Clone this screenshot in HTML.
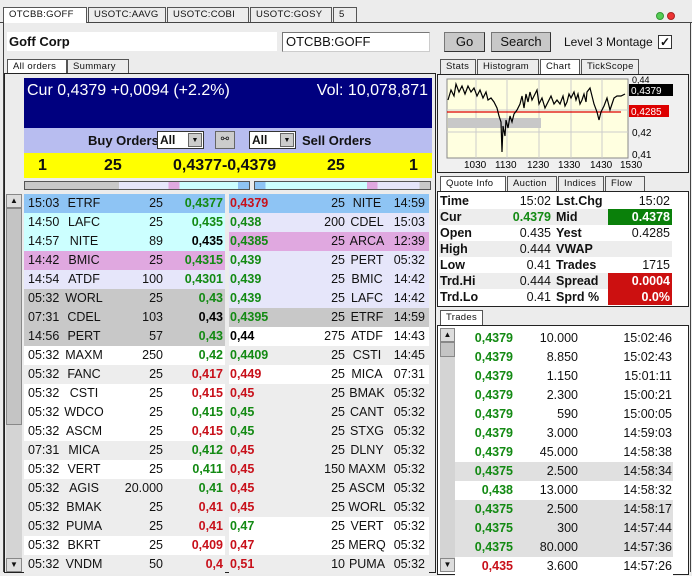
<!DOCTYPE html><html><head><meta charset="utf-8"><style>
*{margin:0;padding:0;box-sizing:border-box}
body{width:692px;height:572px;overflow:hidden;background:#ececec;font-family:"Liberation Sans",sans-serif;font-size:12px;color:#111;position:relative}
.a{position:absolute}
.tab{position:absolute;height:15px;border:1px solid #555;border-bottom:none;background:#ececec;font-size:9.5px;letter-spacing:.3px;padding:1px 0 0 5px;white-space:nowrap;overflow:hidden}
.r{position:absolute;height:19px;line-height:19px;font-size:12.5px}
.r span{position:absolute;white-space:nowrap}
.g{color:#138a13;font-weight:bold}.d{color:#c8101a;font-weight:bold}.k{color:#000;font-weight:bold}
.q{position:absolute;height:16px;line-height:16px;left:439px;width:233px;font-size:12.5px}
.q span{position:absolute;white-space:nowrap}
.btn{position:absolute;background:#c8c8c8;border:1px solid #777;border-right-color:#333;border-bottom-color:#333;text-align:center;font-size:13px;line-height:17px}
</style></head><body>
<div class="a" style="left:0;top:22px;width:692px;height:1px;background:#444"></div>
<div class="tab" style="left:3px;top:7px;width:84px;background:#fff;height:16px">OTCBB:GOFF</div>
<div class="tab" style="left:88px;top:7px;width:78px">USOTC:AAVG</div>
<div class="tab" style="left:167px;top:7px;width:82px">USOTC:COBI</div>
<div class="tab" style="left:250px;top:7px;width:82px">USOTC:GOSY</div>
<div class="tab" style="left:333px;top:7px;width:24px">5</div>
<div class="a" style="left:656px;top:12px;width:8px;height:8px;border-radius:50%;background:#5c5;border:1px solid #393"></div>
<div class="a" style="left:667px;top:12px;width:8px;height:8px;border-radius:50%;background:#e33;border:1px solid #a22"></div>
<div class="a" style="left:3px;top:22px;width:1px;height:550px;background:#444"></div>
<div class="a" style="left:690px;top:22px;width:1px;height:550px;background:#444"></div>
<div class="a" style="left:7px;top:32px;width:270px;height:19px;background:#fff;font-weight:bold;font-size:13px;line-height:19px;padding-left:2px">Goff Corp</div>
<div class="a" style="left:282px;top:32px;width:148px;height:20px;background:#fff;border:1px solid #777;border-right-color:#ccc;border-bottom-color:#ccc;font-size:13px;line-height:18px;padding-left:3px">OTCBB:GOFF</div>
<div class="btn" style="left:444px;top:32px;width:41px;height:20px">Go</div>
<div class="btn" style="left:491px;top:32px;width:60px;height:20px">Search</div>
<div class="a" style="left:564px;top:34px;font-size:12px;line-height:17px">Level 3 Montage</div>
<div class="a" style="left:658px;top:35px;width:14px;height:14px;background:#fff;border:1px solid #333;font-size:12px;line-height:12px;text-align:center;font-weight:bold">✓</div>
<div class="tab" style="left:7px;top:59px;width:60px;background:#fff">All orders</div>
<div class="tab" style="left:67px;top:59px;width:62px">Summary</div>
<div class="a" style="left:4px;top:73px;width:432px;height:500px;border:1px solid #222;background:#ececec"></div>
<div class="a" style="left:24px;top:78px;width:408px;height:50px;background:#00007f;color:#fff;font-size:16px;padding:4px 3px;line-height:18px">Cur 0,4379 +0,0094 (+2.2%)<span style="position:absolute;right:4px;top:4px">Vol: 10,078,871</span></div>
<div class="a" style="left:24px;top:128px;width:408px;height:25px;background:#b8bdf0"></div>
<div class="a" style="left:88px;top:133px;font-weight:bold;font-size:13px">Buy Orders</div>
<div class="a" style="left:157px;top:131px;width:47px;height:18px;background:#fff;border:1px solid #333;font-weight:bold;font-size:12px;padding-left:2px;line-height:16px">All<span style="position:absolute;right:1px;top:1px;width:14px;height:14px;background:#ccc;border:1px solid #666;font-size:7px;text-align:center;line-height:13px">▼</span></div>
<div class="a" style="left:215px;top:131px;width:20px;height:18px;background:#ccc;border:1px solid #666;font-size:10px;text-align:center;line-height:16px">⚯</div>
<div class="a" style="left:249px;top:131px;width:47px;height:18px;background:#fff;border:1px solid #333;font-weight:bold;font-size:12px;padding-left:2px;line-height:16px">All<span style="position:absolute;right:1px;top:1px;width:14px;height:14px;background:#ccc;border:1px solid #666;font-size:7px;text-align:center;line-height:13px">▼</span></div>
<div class="a" style="left:302px;top:133px;font-weight:bold;font-size:13px">Sell Orders</div>
<div class="a" style="left:24px;top:153px;width:408px;height:25px;background:#ffff00;font-weight:bold;font-size:16px;line-height:25px">
<span style="position:absolute;left:14px">1</span><span style="position:absolute;left:80px">25</span><span style="position:absolute;left:149px">0,4377-0,4379</span><span style="position:absolute;left:303px">25</span><span style="position:absolute;left:385px">1</span></div>
<div class="a" style="left:24px;top:181px;width:226px;height:9px;border:1px solid #555;background:linear-gradient(90deg,#c8c8c8 0 42%,#e6e6fa 42% 64%,#e0a8e0 64% 69%,#ccffff 69% 95%,#8ec4f4 95%)"></div>
<div class="a" style="left:254px;top:181px;width:177px;height:9px;border:1px solid #555;background:linear-gradient(90deg,#8ec4f4 0 6%,#ccffff 6% 64%,#e0a8e0 64% 70%,#e6e6fa 70% 94%,#c8c8c8 94%)"></div>
<div class="a" style="left:6px;top:194px;width:16px;height:378px;background:#d4d4d4"></div>
<div class="a" style="left:6px;top:194px;width:16px;height:14px;background:#ddd;border:1px solid #888;font-size:8px;text-align:center;line-height:12px">▲</div>
<div class="a" style="left:6px;top:208px;width:16px;height:217px;background:#c4c4c4;border:1px solid #888"></div>
<div class="a" style="left:6px;top:558px;width:16px;height:14px;background:#ddd;border:1px solid #888;font-size:8px;text-align:center;line-height:12px">▼</div>
<div id="L"></div>
<div class="tab" style="left:440px;top:59px;width:36px">Stats</div>
<div class="tab" style="left:477px;top:59px;width:62px">Histogram</div>
<div class="tab" style="left:540px;top:59px;width:40px;background:#fff">Chart</div>
<div class="tab" style="left:581px;top:59px;width:58px">TickScope</div>
<div class="a" style="left:437px;top:74px;width:252px;height:99px;border:1px solid #222;background:#f0f0f0"></div>
<svg class="a" style="left:437px;top:74px" width="252" height="99">
<rect x="10" y="5" width="181" height="79" fill="#ffffe0" stroke="#888"/>
<g stroke="#ccc" stroke-width="1"><line x1="39" y1="5" x2="39" y2="84"/><line x1="70" y1="5" x2="70" y2="84"/><line x1="102" y1="5" x2="102" y2="84"/><line x1="134" y1="5" x2="134" y2="84"/><line x1="165" y1="5" x2="165" y2="84"/><line x1="10" y1="36" x2="191" y2="36"/><line x1="10" y1="58" x2="191" y2="58"/></g>
<rect x="11" y="44" width="93" height="10" fill="#c8c8c8"/>
<line x1="10" y1="38" x2="184" y2="38" stroke="#d00" stroke-width="1.2"/>
<polyline fill="none" stroke="#000" stroke-width="1.2" points="11,26 14,16 17,22 19,10 22,18 25,12 28,20 31,12 34,18 37,14 40,22 43,16 46,24 49,18 51,26 54,24 57,28 60,34 62,42 64,48 65,78 66,52 68,62 69,46 71,54 73,42 75,48 77,40 80,36 83,30 85,22 87,34 89,20 91,28 93,18 95,26 98,20 100,16 102,30 105,24 108,34 111,28 114,22 117,30 120,26 123,30 126,22 128,32 130,28 132,20 134,24 137,18 139,26 141,20 143,30 145,26 147,20 149,28 150,18 153,14 155,22 157,30 160,38 162,46 164,38 167,32 170,24 173,36 175,30 177,24 180,22 184,22 188,20"/>
<text x="195" y="9" fill="#000" font-size="9" font-family="Liberation Sans">0,44</text>
<rect x="192" y="10" width="44" height="12" fill="#000"/><text x="194" y="20" fill="#fff" font-size="10" font-family="Liberation Sans">0,4379</text>
<rect x="192" y="31" width="40" height="12" fill="#d00"/><text x="194" y="41" fill="#fff" font-size="10" font-family="Liberation Sans">0,4285</text>
<text x="195" y="62" fill="#000" font-size="10" font-family="Liberation Sans">0,42</text>
<text x="195" y="84" fill="#000" font-size="10" font-family="Liberation Sans">0,41</text>
<g font-size="10" font-family="Liberation Sans" fill="#000"><text x="27" y="94">1030</text><text x="58" y="94">1130</text><text x="90" y="94">1230</text><text x="121" y="94">1330</text><text x="153" y="94">1430</text><text x="183" y="94">1530</text></g>
</svg>
<div class="tab" style="left:440px;top:176px;width:66px;background:#fff">Quote Info</div>
<div class="tab" style="left:507px;top:176px;width:50px">Auction</div>
<div class="tab" style="left:558px;top:176px;width:46px">Indices</div>
<div class="tab" style="left:605px;top:176px;width:40px">Flow</div>
<div class="a" style="left:437px;top:191px;width:252px;height:116px;border:1px solid #222;background:#fff"></div>
<div id="Q"></div>
<div class="tab" style="left:440px;top:310px;width:43px;background:#fff">Trades</div>
<div class="a" style="left:437px;top:325px;width:252px;height:250px;border:1px solid #222;background:#fff"></div>
<div class="a" style="left:440px;top:328px;width:15px;height:244px;background:#d4d4d4"></div>
<div class="a" style="left:440px;top:328px;width:15px;height:14px;background:#ddd;border:1px solid #888;font-size:8px;text-align:center;line-height:12px">▲</div>
<div class="a" style="left:440px;top:342px;width:15px;height:15px;background:#c4c4c4;border:1px solid #888"></div>
<div class="a" style="left:440px;top:558px;width:15px;height:14px;background:#ddd;border:1px solid #888;font-size:8px;text-align:center;line-height:12px">▼</div>
<div id="T"></div>
<script>
var B='#8ec4f4',C='#ccffff',P='#e0a8e0',V='#e6e6fa',G='#c8c8c8',W='#fff',E='#ededed';
var L=[[B,'15:03','ETRF','25','0,4377','g'],[C,'14:50','LAFC','25','0,435','g'],[C,'14:57','NITE','89','0,435','k'],[P,'14:42','BMIC','25','0,4315','g'],[V,'14:54','ATDF','100','0,4301','g'],[G,'05:32','WORL','25','0,43','g'],[G,'07:31','CDEL','103','0,43','k'],[G,'14:56','PERT','57','0,43','g'],[W,'05:32','MAXM','250','0,42','g'],[E,'05:32','FANC','25','0,417','d'],[W,'05:32','CSTI','25','0,415','d'],[W,'05:32','WDCO','25','0,415','g'],[W,'05:32','ASCM','25','0,415','d'],[E,'07:31','MICA','25','0,412','g'],[W,'05:32','VERT','25','0,411','g'],[E,'05:32','AGIS','20.000','0,41','g'],[E,'05:32','BMAK','25','0,41','d'],[E,'05:32','PUMA','25','0,41','d'],[W,'05:32','BKRT','25','0,409','d'],[E,'05:32','VNDM','50','0,4','d']];
var R=[[B,'0,4379','d','25','NITE','14:59'],[V,'0,438','g','200','CDEL','15:03'],[P,'0,4385','g','25','ARCA','12:39'],[V,'0,439','g','25','PERT','05:32'],[V,'0,439','g','25','BMIC','14:42'],[V,'0,439','g','25','LAFC','14:42'],[G,'0,4395','g','25','ETRF','14:59'],[W,'0,44','k','275','ATDF','14:43'],[E,'0,4409','g','25','CSTI','14:45'],[W,'0,449','d','25','MICA','07:31'],[E,'0,45','d','25','BMAK','05:32'],[E,'0,45','g','25','CANT','05:32'],[E,'0,45','g','25','STXG','05:32'],[E,'0,45','d','25','DLNY','05:32'],[E,'0,45','d','150','MAXM','05:32'],[E,'0,45','d','25','ASCM','05:32'],[E,'0,45','d','25','WORL','05:32'],[W,'0,47','g','25','VERT','05:32'],[W,'0,47','d','25','MERQ','05:32'],[E,'0,51','d','10','PUMA','05:32']];
var h='';
for(var i=0;i<20;i++){var y=194+19*i,a=L[i],b=R[i];
h+='<div class="r" style="left:24px;top:'+y+'px;width:201px;background:'+a[0]+'"><span style="left:4px">'+a[1]+'</span><span style="left:38px;width:44px;text-align:center">'+a[2]+'</span><span style="right:62px">'+a[3]+'</span><span class="'+a[5]+'" style="right:2px">'+a[4]+'</span></div>';
h+='<div class="r" style="left:229px;top:'+y+'px;width:200px;background:'+b[0]+'"><span class="'+b[2]+'" style="left:1px">'+b[1]+'</span><span style="right:84px">'+b[3]+'</span><span style="left:117px;width:42px;text-align:center">'+b[4]+'</span><span style="right:4px">'+b[5]+'</span></div>';}
document.getElementById('L').outerHTML=h;
var Q=[['Time','15:02','Lst.Chg','15:02',W],['Cur','0.4379','Mid','0.4378',E,'cur','mid'],[' Open','0.435','Yest','0.4285',W],['High','0.444','VWAP','',E],['Low','0.41','Trades','1715',W],['Trd.Hi','0.444','Spread','0.0004',E,0,'red'],['Trd.Lo','0.41','Sprd %','0.0%',W,0,'red']];
h='';for(i=0;i<7;i++){var q=Q[i],y=193+16*i;
var bx='';
if(q[6]=='mid')bx='<span style="left:169px;width:64px;height:16px;background:#0a800a"></span>';
if(q[6]=='red')bx='<span style="left:169px;width:64px;height:16px;background:#cc1010"></span>';
h+='<div class="q" style="top:'+y+'px;background:'+q[4]+'">'+bx+'<span style="left:1px;font-weight:bold">'+q[0]+'</span><span style="right:121px;'+(q[5]?'color:#138a13;font-weight:bold':'')+'">'+q[1]+'</span><span style="left:117px;font-weight:bold">'+q[2]+'</span><span style="right:2px;'+(q[6]?'color:#fff;font-weight:bold':'')+'">'+q[3]+'</span></div>';}
document.getElementById('Q').outerHTML=h;
var T=[['0,4379','10.000','15:02:46',W],['0,4379','8.850','15:02:43',W],['0,4379','1.150','15:01:11',W],['0,4379','2.300','15:00:21',W],['0,4379','590','15:00:05',W],['0,4379','3.000','14:59:03',W],['0,4379','45.000','14:58:38',W],['0,4375','2.500','14:58:34','#e0e0e0'],['0,438','13.000','14:58:32',W],['0,4375','2.500','14:58:17','#e0e0e0'],['0,4375','300','14:57:44','#e0e0e0'],['0,4375','80.000','14:57:36','#e0e0e0'],['0,435','3.600','14:57:26',W]];
h='';for(i=0;i<13;i++){var t=T[i],y=329+19*i;
h+='<div class="r" style="left:455px;top:'+y+'px;width:218px;background:'+t[3]+'"><span class="'+(i==12?'d':'g')+'" style="right:160px">'+t[0]+'</span><span style="right:95px">'+t[1]+'</span><span style="right:1px">'+t[2]+'</span></div>';}
document.getElementById('T').outerHTML=h;
</script>
</body></html>
